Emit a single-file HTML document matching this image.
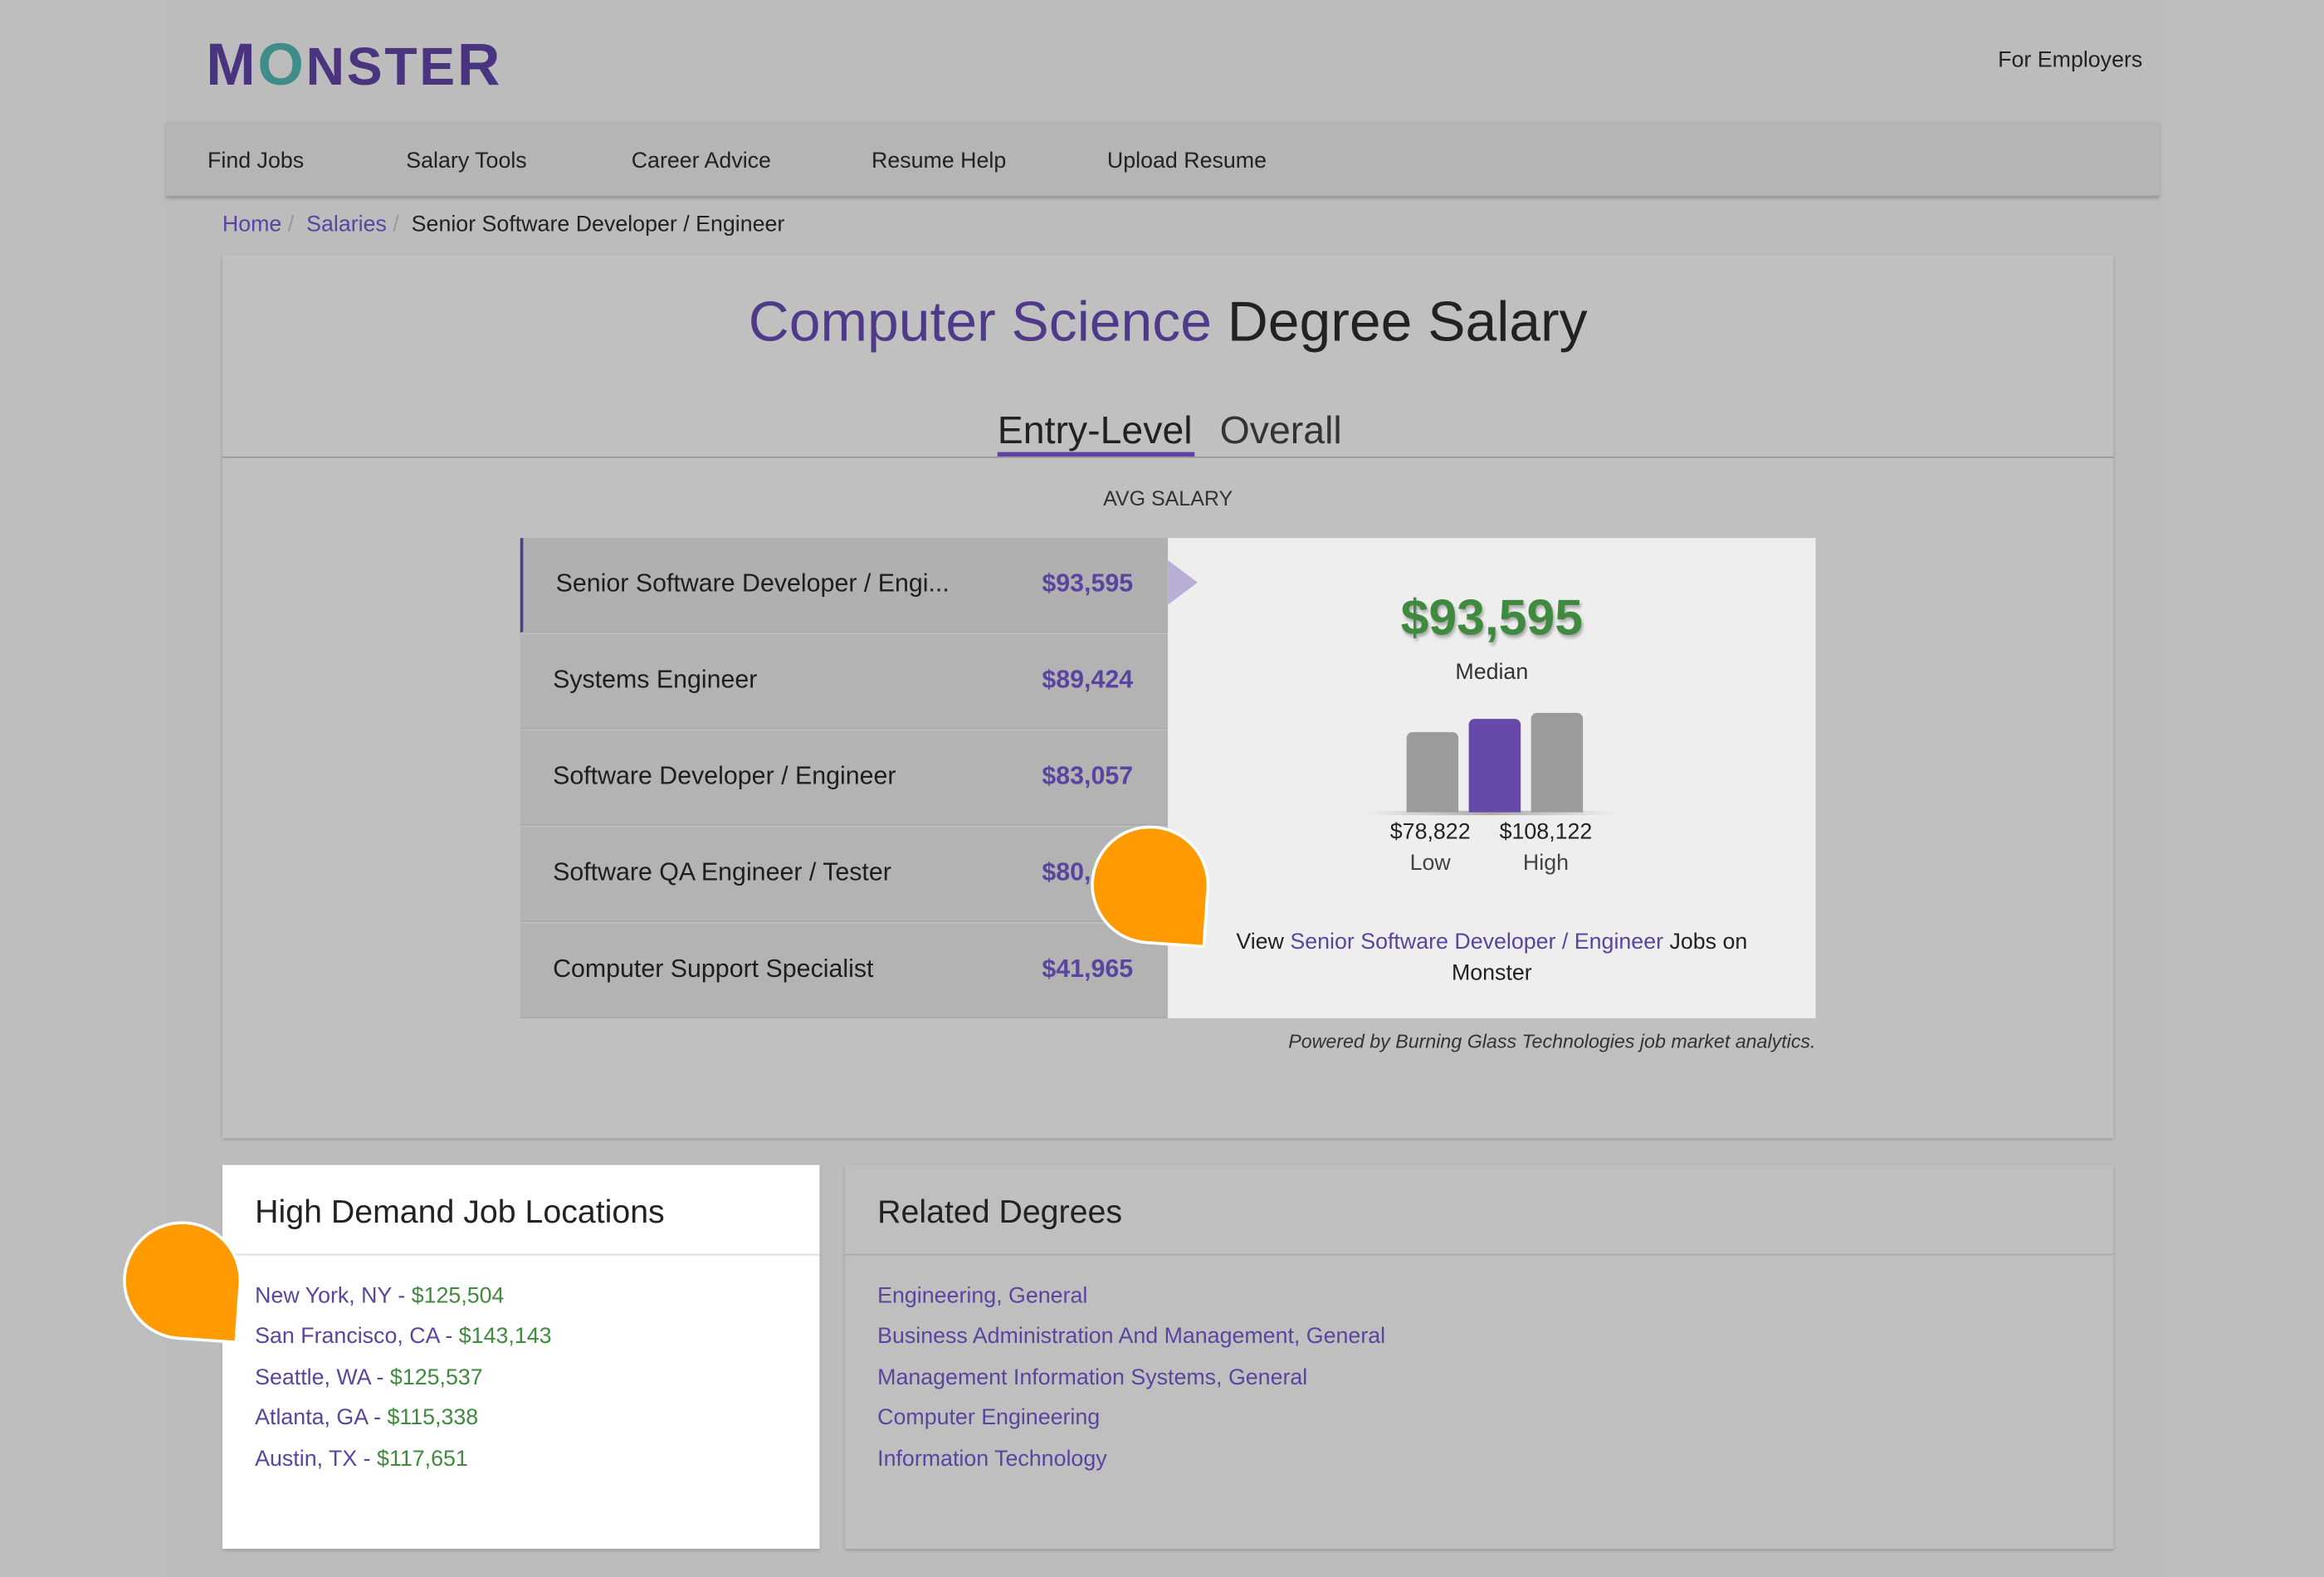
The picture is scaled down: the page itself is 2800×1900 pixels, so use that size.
<!DOCTYPE html>
<html><head><meta charset="utf-8"><style>
*{margin:0;padding:0;box-sizing:border-box}
html,body{width:2800px;height:1900px;overflow:hidden;background:#bdbdbd;font-family:"Liberation Sans",sans-serif;color:#222}
#s{position:absolute;left:0;top:0;width:1568px;height:1064px;transform:scale(1.785714);transform-origin:0 0}
.a{position:absolute;white-space:nowrap}
.p{color:#5a44a0}.g{color:#3f8a3f}
.row{position:absolute;left:351px;width:437px;height:64px;background:#b3b3b3;border-bottom:1px solid #a9a9a9}
.row .n{position:absolute;left:22px;top:21px;font-size:17px;color:#1e1e1e}
.row .v{position:absolute;left:352px;top:21px;font-size:17px;color:#5a44a0;font-weight:bold}
.pin{position:absolute;width:80px;height:80px;background:#ff9a00;border:2px solid #fff;border-radius:50% 50% 0 50%;transform:rotate(4deg)}
.lk{position:absolute;font-size:15px}
</style></head><body><div id="s">
<div class="a" style="left:112px;top:0;width:1345px;height:1064px;background:#bcbcbc"></div>
<div class="a" style="left:139px;top:22px;font-size:40px;font-weight:bold;color:#4a3480;letter-spacing:1.5px">M<span style="color:#3e8d8b">O</span><span style="font-size:36px">NSTE</span>R</div>
<div class="a" style="left:1348px;top:32px;font-size:15px">For Employers</div>
<div class="a" style="left:112px;top:82px;width:1345px;height:50px;background:#b5b5b5;box-shadow:0 2px 2px #999"></div>
<div class="a" style="left:140px;top:100px;font-size:15px">Find Jobs</div>
<div class="a" style="left:274px;top:100px;font-size:15px">Salary Tools</div>
<div class="a" style="left:426px;top:100px;font-size:15px">Career Advice</div>
<div class="a" style="left:588px;top:100px;font-size:15px">Resume Help</div>
<div class="a" style="left:747px;top:100px;font-size:15px">Upload Resume</div>
<div class="a" style="left:150px;top:143px;font-size:15px"><span class="p">Home</span> <span style="color:#999">/</span> &nbsp;<span class="p">Salaries</span> <span style="color:#999">/</span> &nbsp;Senior Software Developer / Engineer</div>
<div class="a" style="left:150px;top:172px;width:1276px;height:596px;background:#c0c0c0;box-shadow:0 1px 2px #999"></div>
<div class="a" style="left:150px;top:197px;width:1276px;text-align:center;font-size:38px;color:#222"><span style="color:#4f3a8a">Computer Science</span> Degree Salary</div>
<div class="a" style="left:150px;top:308px;width:1276px;height:1px;background:#999"></div>
<div class="a" style="left:673px;top:275px;font-size:26px;color:#222">Entry-Level</div>
<div class="a" style="left:673px;top:305px;width:133px;height:3px;background:#5a44a0"></div>
<div class="a" style="left:823px;top:275px;font-size:26px;color:#333">Overall</div>
<div class="a" style="left:150px;top:328px;width:1276px;text-align:center;font-size:14px;color:#333">AVG SALARY</div>
<div class="row" style="top:363px;background:#b0b0b0;border-left:2px solid #4f3a8a"><span class="n">Senior Software Developer / Engi...</span><span class="v" style="left:350px">$93,595</span></div>
<div class="row" style="top:428px"><span class="n">Systems Engineer</span><span class="v">$89,424</span></div>
<div class="row" style="top:493px"><span class="n">Software Developer / Engineer</span><span class="v">$83,057</span></div>
<div class="row" style="top:558px"><span class="n">Software QA Engineer / Tester</span><span class="v">$80,</span></div>
<div class="row" style="top:623px"><span class="n">Computer Support Specialist</span><span class="v">$41,965</span></div>
<div class="a" style="left:788px;top:363px;width:437px;height:324px;background:#efeeef"></div>
<div class="a" style="left:788px;top:378px;width:0;height:0;border-top:15px solid transparent;border-bottom:15px solid transparent;border-left:20px solid #b9afd6"></div>
<div class="a g" style="left:788px;top:398px;width:437px;text-align:center;font-size:34px;font-weight:bold;text-shadow:1px 2px 2px #aaa">$93,595</div>
<div class="a" style="left:788px;top:445px;width:437px;text-align:center;font-size:15px;color:#333">Median</div>
<div class="a" style="left:922px;top:547px;width:168px;height:3px;background:linear-gradient(90deg,#eee,#aaa,#eee)"></div>
<div class="a" style="left:949px;top:494px;width:35px;height:54px;background:#9b9b9b;border-radius:4px 4px 0 0"></div>
<div class="a" style="left:991px;top:485px;width:35px;height:63px;background:#6649a8;border-radius:4px 4px 0 0"></div>
<div class="a" style="left:1033px;top:481px;width:35px;height:67px;background:#9b9b9b;border-radius:4px 4px 0 0"></div>
<div class="a" style="left:925px;top:553px;width:80px;text-align:center;font-size:15px">$78,822</div>
<div class="a" style="left:1003px;top:553px;width:80px;text-align:center;font-size:15px">$108,122</div>
<div class="a" style="left:925px;top:574px;width:80px;text-align:center;font-size:15px;color:#444">Low</div>
<div class="a" style="left:1003px;top:574px;width:80px;text-align:center;font-size:15px;color:#444">High</div>
<div class="a" style="left:798px;top:625px;width:417px;text-align:center;font-size:15px;line-height:21px;white-space:normal">View <span class="p">Senior Software Developer / Engineer</span> Jobs on<br>Monster</div>
<div class="a" style="left:700px;top:695px;width:525px;text-align:right;font-size:13px;font-style:italic;color:#333">Powered by Burning Glass Technologies job market analytics.</div>
<div class="pin" style="left:736px;top:557px"></div>
<div class="a" style="left:150px;top:786px;width:403px;height:259px;background:#fff;box-shadow:0 1px 2px #999"></div>
<div class="a" style="left:150px;top:846px;width:403px;height:1px;background:#ddd"></div>
<div class="a" style="left:172px;top:805px;font-size:22px;color:#222">High Demand Job Locations</div>
<div class="lk" style="left:172px;top:866px"><span class="p">New York, NY -</span> <span class="g">$125,504</span></div>
<div class="lk" style="left:172px;top:893px"><span class="p">San Francisco, CA -</span> <span class="g">$143,143</span></div>
<div class="lk" style="left:172px;top:921px"><span class="p">Seattle, WA -</span> <span class="g">$125,537</span></div>
<div class="lk" style="left:172px;top:948px"><span class="p">Atlanta, GA -</span> <span class="g">$115,338</span></div>
<div class="lk" style="left:172px;top:976px"><span class="p">Austin, TX -</span> <span class="g">$117,651</span></div>
<div class="a" style="left:570px;top:786px;width:856px;height:259px;background:#bfbfbf;box-shadow:0 1px 2px #999"></div>
<div class="a" style="left:570px;top:846px;width:856px;height:1px;background:#aaa"></div>
<div class="a" style="left:592px;top:805px;font-size:22px;color:#222">Related Degrees</div>
<div class="lk p" style="left:592px;top:866px">Engineering, General</div>
<div class="lk p" style="left:592px;top:893px">Business Administration And Management, General</div>
<div class="lk p" style="left:592px;top:921px">Management Information Systems, General</div>
<div class="lk p" style="left:592px;top:948px">Computer Engineering</div>
<div class="lk p" style="left:592px;top:976px">Information Technology</div>
<div class="pin" style="left:83px;top:824px"></div>
</div></body></html>
